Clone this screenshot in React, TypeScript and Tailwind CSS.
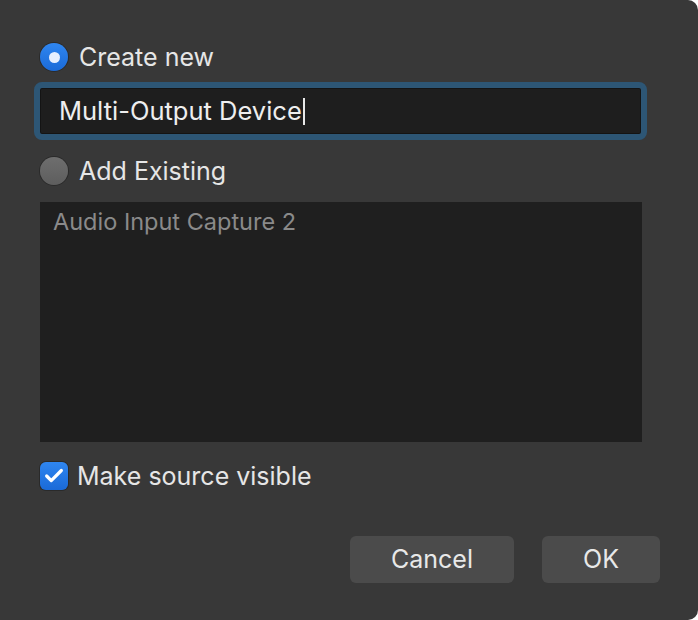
import { Check } from "lucide-react";

function Radio({ checked, label }: { checked: boolean; label: string }) {
  return (
    <div className="flex items-center gap-[11px] h-[28px]">
      {checked ? (
        <div className="w-[28px] h-[28px] rounded-full bg-gradient-to-b from-[#2f86f0] to-[#1a6ad8] flex items-center justify-center shadow-[0_0_0_1px_rgba(0,0,0,0.25)]">
          <div className="w-[11px] h-[11px] rounded-full bg-[#e6efff]" />
        </div>
      ) : (
        <div className="w-[28px] h-[28px] rounded-full bg-gradient-to-b from-[#6e6e6e] to-[#5e5e5e] shadow-[0_0_0_1px_rgba(0,0,0,0.25)]" />
      )}
      <span className="text-[25px] leading-none text-[#e6e6e6]">{label}</span>
    </div>
  );
}

export default function App() {
  return (
    <div
      className="w-[698px] h-[620px] bg-[#383838] flex flex-col px-[40px] pt-[43px] rounded-br-[10px] rounded-tr-[10px]"
      style={{ fontFamily: "Inter, 'Liberation Sans', sans-serif" }}
    >
      <Radio checked label="Create new" />

      <div className="mt-[11px] -mx-[6px] w-[613px] h-[58px] rounded-[8px] border-[6px] border-[#2d5675] bg-[#1e1e1e] shadow-[inset_0_0_0_1px_#141414] flex items-center pl-[19px]">
        <span className="text-[25.5px] leading-none text-[#eeeeee]">Multi-Output Device</span>
        <span className="w-[2px] h-[27px] bg-[#e8e8e8] ml-[1px]" />
      </div>

      <div className="mt-[17px]">
        <Radio checked={false} label="Add Existing" />
      </div>

      <div className="mt-[17px] w-[602px] h-[240px] bg-[#1f1f1f] px-[13px] pt-[8px]">
        <span className="text-[23.5px] leading-none text-[#8a8a8a]">Audio Input Capture 2</span>
      </div>

      <div className="mt-[20px] flex items-center gap-[9px] h-[28px]">
        <div className="w-[28px] h-[28px] rounded-[6px] bg-gradient-to-b from-[#2f86f0] to-[#1a6ad8] flex items-center justify-center shadow-[0_0_0_1px_rgba(0,0,0,0.25)]">
          <Check className="w-[22px] h-[22px] text-white" strokeWidth={3.5} />
        </div>
        <span className="text-[25px] leading-none text-[#e6e6e6]">Make source visible</span>
      </div>

      <div className="mt-[46px] flex justify-end gap-[28px] -mr-[2px]">
        <button className="w-[164px] h-[47px] rounded-[6px] bg-[#4b4b4b] text-[25px] text-[#e8e8e8]">
          Cancel
        </button>
        <button className="w-[118px] h-[47px] rounded-[6px] bg-[#4b4b4b] text-[25px] text-[#e8e8e8]">
          OK
        </button>
      </div>
    </div>
  );
}
